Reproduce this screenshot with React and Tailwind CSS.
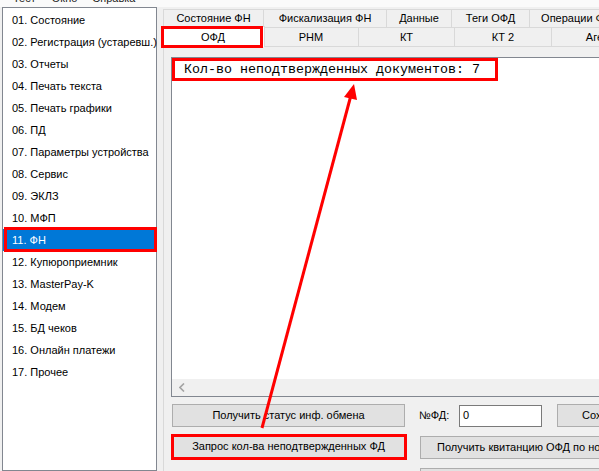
import React from "react";

const items = [
  "01. Состояние",
  "02. Регистрация (устаревш.)",
  "03. Отчеты",
  "04. Печать текста",
  "05. Печать графики",
  "06. ПД",
  "07. Параметры устройства",
  "08. Сервис",
  "09. ЭКЛЗ",
  "10. МФП",
  "11. ФН",
  "12. Купюроприемник",
  "13. MasterPay-K",
  "14. Модем",
  "15. БД чеков",
  "16. Онлайн платежи",
  "17. Прочее",
];

const row1 = [
  ["Состояние ФН", "w-[100px]"],
  ["Фискализация ФН", "w-[123px]"],
  ["Данные", "w-[65px]"],
  ["Теги ОФД", "w-[78px]"],
  ["Операции ФН", "w-[94px]"],
];

const row2 = [
  ["РНМ", "w-[95px]"],
  ["КТ", "w-[96px]"],
  ["КТ 2", "w-[97px]"],
  ["Агент", "w-[97px]"],
];

function Btn({ children, className = "" }) {
  return (
    <div
      className={
        "h-[23px] shrink-0 border border-[#adadad] bg-[#e1e1e1] flex items-center whitespace-nowrap overflow-hidden " +
        className
      }
    >
      {children}
    </div>
  );
}

export default function App() {
  return (
    <div className="relative w-[599px] h-[471px] overflow-hidden bg-[#f0f0f0] text-[11px] text-black font-['Liberation_Sans',Arial,sans-serif]">
      {/* menu bar, mostly scrolled off */}
      <div className="h-[7px] overflow-hidden bg-[#fafafa]">
        <div className="flex -mt-[9px] leading-[14px] text-[#222]">
          <span className="ml-[13px]">Тест</span>
          <span className="ml-[16px]">Окно</span>
          <span className="ml-[15px]">Справка</span>
        </div>
      </div>

      <div className="flex h-[464px]">
        {/* left list */}
        <div className="ml-[2px] w-[155px] h-full shrink-0 border border-[#828790] bg-white pt-[1px]">
          {items.map((t) =>
            t === "11. ФН" ? (
              <div
                key={t}
                className="relative h-[22px] flex items-center pl-[9px] bg-[#0078d7] text-white whitespace-nowrap"
              >
                {t}
                <div className="absolute left-[1px] -right-[1px] -top-[2px] -bottom-[1px] border-[3px] border-[#ff0000]" />
              </div>
            ) : (
              <div
                key={t}
                className="h-[22px] flex items-center pl-[9px] whitespace-nowrap"
              >
                {t}
              </div>
            )
          )}
        </div>

        {/* right tab control */}
        <div className="ml-[6px] flex-1 min-w-0 flex flex-col pt-[2px]">
          <div className="flex h-[18px] shrink-0">
            {row1.map(([t, w]) => (
              <div
                key={t}
                className={
                  w +
                  " shrink-0 border-t border-l border-[#d9d9d9] bg-[#f0f0f0] flex items-center justify-center whitespace-nowrap"
                }
              >
                {t}
              </div>
            ))}
          </div>
          <div className="flex h-[19px] shrink-0">
            <div className="relative z-10 w-[104px] -ml-[2px] -mr-[2px] -mt-[1px] h-[21px] shrink-0 border-t border-l border-r border-[#d9d9d9] bg-white flex items-center justify-center">
              ОФД
              <div className="absolute -left-[1px] right-[1px] -top-[1px] -bottom-[1px] border-[3px] border-[#ff0000]" />
            </div>
            {row2.map(([t, w]) => (
              <div
                key={t}
                className={
                  w +
                  " shrink-0 border-t border-l border-[#d9d9d9] bg-[#f0f0f0] flex items-center justify-center whitespace-nowrap"
                }
              >
                {t}
              </div>
            ))}
          </div>

          {/* tab page */}
          <div className="flex-1 border-t border-l border-[#d9d9d9] bg-[#f0f0f0] pl-[7px] pt-[10px]">
            <div className="w-[460px] h-[340px] border border-[#828790] bg-white flex flex-col">
              <div className="flex-1">
                <div className="relative w-[326px] h-[23px] flex items-center pl-[12px] font-['Liberation_Mono','Courier_New',monospace] text-[13.33px] whitespace-nowrap">
                  Кол-во неподтвержденных документов: 7
                  <div className="absolute inset-0 border-[3px] border-[#ff0000]" />
                </div>
              </div>
              <div className="h-[17px] bg-[#f0f0f0] flex items-center pl-[7px]">
                <svg width="6" height="9" viewBox="0 0 6 9">
                  <path
                    d="M5 0.5 L1 4.5 L5 8.5"
                    fill="none"
                    stroke="#a3a3a3"
                    strokeWidth="1.6"
                  />
                </svg>
              </div>
            </div>

            {/* buttons */}
            <div className="flex items-center mt-[7px]">
              <Btn className="ml-[1px] w-[233px] justify-center">
                Получить статус инф. обмена
              </Btn>
              <div className="ml-[14px] w-[40px] shrink-0">№ФД:</div>
              <div className="w-[83px] h-[22px] shrink-0 border border-[#7a7a7a] bg-white flex items-center pl-[3px]">
                0
              </div>
              <Btn className="ml-[15px] w-[150px] pl-[24px]">Сохранить</Btn>
            </div>
            <div className="flex items-start mt-[8px]">
              <div className="relative ml-[1px] shrink-0">
                <Btn className="w-[233px] justify-center border-[#0078d7]">
                  Запрос кол-ва неподтвержденных ФД
                </Btn>
                <div className="absolute -left-[1px] -right-[2px] -top-[1px] -bottom-[2px] border-[3px] border-[#ff0000]" />
              </div>
              <Btn className="ml-[15px] mt-[1px] w-[240px] pl-[16px]">
                Получить квитанцию ОФД по номеру ФД
              </Btn>
            </div>
            <div className="flex mt-[9px]">
              <Btn className="ml-[249px] w-[240px] pl-[16px]">
                Получить документ из архива ФН
              </Btn>
            </div>
          </div>
        </div>
      </div>

      {/* annotation arrow */}
      <svg
        className="absolute inset-0 pointer-events-none z-20"
        width="599"
        height="471"
        viewBox="0 0 599 471"
      >
        <line
          x1="262"
          y1="428"
          x2="350.5"
          y2="97"
          stroke="#ff0000"
          strokeWidth="3"
        />
        <polygon points="354,84 357,100 344,97" fill="#ff0000" />
      </svg>
    </div>
  );
}
